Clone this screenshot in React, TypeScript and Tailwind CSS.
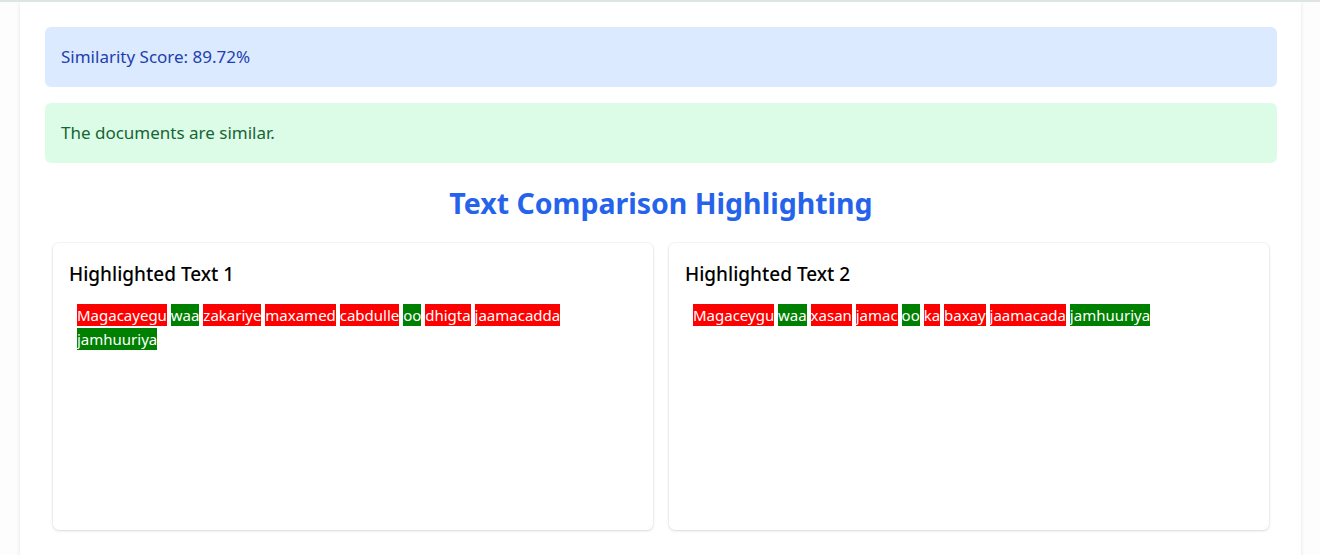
import React from "react";

type W = { t: string; m: boolean };

const text1: W[] = [
  { t: "Magacayegu", m: false },
  { t: "waa", m: true },
  { t: "zakariye", m: false },
  { t: "maxamed", m: false },
  { t: "cabdulle", m: false },
  { t: "oo", m: true },
  { t: "dhigta", m: false },
  { t: "jaamacadda", m: false },
  { t: "jamhuuriya", m: true },
];

const text2: W[] = [
  { t: "Magaceygu", m: false },
  { t: "waa", m: true },
  { t: "xasan", m: false },
  { t: "jamac", m: false },
  { t: "oo", m: true },
  { t: "ka", m: false },
  { t: "baxay", m: false },
  { t: "jaamacada", m: false },
  { t: "jamhuuriya", m: true },
];

function Card({ title, words }: { title: string; words: W[] }) {
  return (
    <div className="h-[287px] rounded-md bg-white px-4 pt-[17px] pb-4 shadow-[0_0_0_1px_rgba(0,0,0,0.03),0_1px_3px_rgba(0,0,0,0.12)]">
      <h3 className="mb-[7px] text-[19px] font-medium leading-7 text-black">{title}</h3>
      <div className="p-2 text-[15px] leading-6 text-white">
        {words.map((w, i) => (
          <React.Fragment key={i}>
            <span className={w.m ? "bg-[#008000] py-[1px]" : "bg-[#ff0000] py-[1px]"}>{w.t}</span>
            {i < words.length - 1 ? " " : ""}
          </React.Fragment>
        ))}
      </div>
    </div>
  );
}

export default function App() {
  return (
    <div
      className="min-h-[555px] overflow-hidden border-t-2 border-[#dde5e2] bg-[#fdfdfd]"
      style={{ fontFamily: '"Segoe UI", "Noto Sans", "Open Sans", sans-serif' }}
    >
      <div className="ml-[20px] w-[1281px] min-h-[600px] bg-white pl-[25px] pr-[24px] pt-[25px] shadow-[0_0_4px_rgba(0,0,0,0.1)]">
        <div className="mb-4 flex h-[60px] items-center rounded-md bg-[#dbeafe] px-4 text-[17px] text-[#1e40af]">
          Similarity Score: 89.72%
        </div>
        <div className="flex h-[60px] items-center rounded-md bg-[#dcfce7] px-4 text-[17px] text-[#166534]">
          The documents are similar.
        </div>
        <h2 className="mt-[22px] mb-[22px] text-center text-[28.5px] font-bold leading-9 text-[#2563eb]">
          Text Comparison Highlighting
        </h2>
        <div className="grid grid-cols-2 gap-4 px-2">
          <Card title="Highlighted Text 1" words={text1} />
          <Card title="Highlighted Text 2" words={text2} />
        </div>
      </div>
    </div>
  );
}
